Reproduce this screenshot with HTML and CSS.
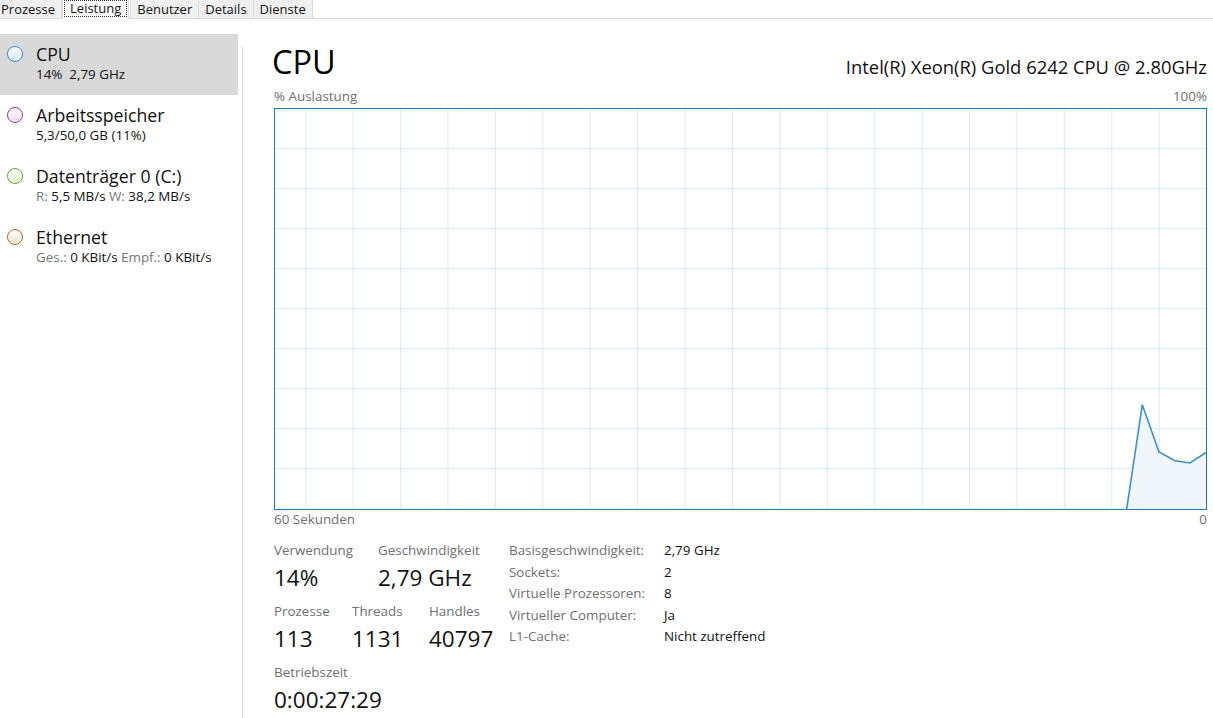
FILE: index.html
```html
<!DOCTYPE html>
<html>
  <head>
    <meta charset="UTF-8">
    <title>Task-Manager - Leistung</title>
    <link rel="stylesheet" href="styles.css">
  </head>
  <body>
    <div class="tabs">
      <span class="tab">Prozesse</span>
      <span class="tab active"><span class="focus">Leistung</span></span>
      <span class="tab">Benutzer</span>
      <span class="tab">Details</span>
      <span class="tab">Dienste</span>
    </div>

    <div class="app">
      <!-- linke Liste -->
      <div class="sidebar">
        <div class="item selected">
          <span class="dot cpu"></span>
          <div>
            <div class="name">CPU</div>
            <div class="sub">14%&nbsp; 2,79 GHz</div>
          </div>
        </div>
        <div class="item">
          <span class="dot mem"></span>
          <div>
            <div class="name">Arbeitsspeicher</div>
            <div class="sub">5,3/50,0 GB (11%)</div>
          </div>
        </div>
        <div class="item">
          <span class="dot disk"></span>
          <div>
            <div class="name">Datenträger 0 (C:)</div>
            <div class="sub"><span class="key">R:</span> 5,5 MB/s <span class="key">W:</span> 38,2 MB/s</div>
          </div>
        </div>
        <div class="item">
          <span class="dot net"></span>
          <div>
            <div class="name">Ethernet</div>
            <div class="sub"><span class="key">Ges.:</span> 0 KBit/s <span class="key">Empf.:</span> 0 KBit/s</div>
          </div>
        </div>
      </div>

      <div class="divider"></div>

      <div class="panel">
        <div class="head">
          <div class="title">CPU</div>
          <div class="model">Intel(R) Xeon(R) Gold 6242 CPU @ 2.80GHz</div>
        </div>
        <div class="axis top">
          <span>% Auslastung</span>
          <span>100%</span>
        </div>
        <div class="graph">
          <svg width="931" height="400" viewBox="0 0 931 400">
            <g class="grid" id="grid"></g>
            <polygon class="area" points="851.7,400 867.3,295.7 884,343 900,351.7 915,354 931,343.5 931,400"></polygon>
            <polyline class="line" points="851.7,400 867.3,295.7 884,343 900,351.7 915,354 931,343.5"></polyline>
          </svg>
        </div>
        <div class="axis bottom">
          <span>60 Sekunden</span>
          <span>0</span>
        </div>

        <div class="stats">
          <div class="live">
            <div class="row">
              <div class="stat w104"><div class="label">Verwendung</div><div class="value">14%</div></div>
              <div class="stat"><div class="label">Geschwindigkeit</div><div class="value">2,79 GHz</div></div>
            </div>
            <div class="row">
              <div class="stat w78"><div class="label">Prozesse</div><div class="value">113</div></div>
              <div class="stat w77"><div class="label">Threads</div><div class="value">1131</div></div>
              <div class="stat"><div class="label">Handles</div><div class="value">40797</div></div>
            </div>
            <div class="row">
              <div class="stat"><div class="label">Betriebszeit</div><div class="value">0:00:27:29</div></div>
            </div>
          </div>
          <div class="info">
            <span class="k">Basisgeschwindigkeit:</span><span class="v">2,79 GHz</span>
            <span class="k">Sockets:</span><span class="v">2</span>
            <span class="k">Virtuelle Prozessoren:</span><span class="v">8</span>
            <span class="k">Virtueller Computer:</span><span class="v">Ja</span>
            <span class="k">L1-Cache:</span><span class="v">Nicht zutreffend</span>
          </div>
        </div>
      </div>
    </div>

    <script>
      // Gitterlinien des Diagramms
      var grid = document.getElementById('grid');
      var ns = 'http://www.w3.org/2000/svg';
      for (var i = 0; i < 19; i++) {
        var x = 30.7 + i * 47.42;
        var v = document.createElementNS(ns, 'line');
        v.setAttribute('x1', x); v.setAttribute('x2', x);
        v.setAttribute('y1', 0); v.setAttribute('y2', 400);
        grid.appendChild(v);
      }
      for (var j = 0; j < 9; j++) {
        var y = 39.5 + j * 40;
        var h = document.createElementNS(ns, 'line');
        h.setAttribute('x1', 0); h.setAttribute('x2', 931);
        h.setAttribute('y1', y); h.setAttribute('y2', y);
        grid.appendChild(h);
      }
    </script>
  </body>
</html>
```

FILE: styles.css
```css
body {
  margin: 0;
  background: #fff;
  font-family: "Open Sans", "Noto Sans", sans-serif;
  color: #000;
  overflow: hidden;
}

/* Reiter oben */
.tabs {
  display: flex;
  height: 19px;
  border-bottom: 1px solid #dadada;
  box-sizing: border-box;
  margin-left: -6px;
  font-size: 13px;
}
.tab {
  display: flex;
  align-items: center;
  height: 18px;
  padding: 0 6px;
  background: #f0f0f0;
  border: 1px solid #dadada;
  border-top: none;
  border-bottom: none;
  margin-right: -1px;
  box-sizing: border-box;
  color: #111;
}
.tab.active {
  background: #fff;
  height: 19px;
  padding: 0 1px 2px;
  margin: 0 1px;
}
.tab.active .focus {
  border: 1px dotted #333;
  padding: 0 5px;
  line-height: 15px;
}

.app {
  display: flex;
  height: 699px;
}

/* linke Liste */
.sidebar {
  width: 238px;
  padding-top: 15px;
}
.item {
  display: flex;
  align-items: flex-start;
  height: 61px;
  box-sizing: border-box;
  padding: 9px 0 0 7px;
}
.item.selected {
  background: #d9d9d9;
}
.dot {
  width: 14px;
  height: 14px;
  border-radius: 50%;
  border: 1.5px solid;
  margin: 3px 13px 0 0;
  flex: none;
}
.dot.cpu { border-color: #2f8bd3; background: radial-gradient(circle at 50% 75%, #d4e8f8, #fff 75%); }
.dot.mem { border-color: #9630bb; background: radial-gradient(circle at 50% 75%, #efdcf6, #fff 75%); }
.dot.disk { border-color: #5fae2c; background: radial-gradient(circle at 50% 75%, #e1f2d2, #fff 75%); }
.dot.net { border-color: #b0671f; background: radial-gradient(circle at 50% 75%, #f4e2d0, #fff 75%); }
.name {
  font-size: 17.7px;
  line-height: 22px;
  color: #111;
}
.sub {
  font-size: 13.4px;
  line-height: 18px;
  color: #111;
}
.sub .key {
  color: #777;
}

.divider {
  width: 1px;
  background: #e3e3e3;
  margin: 27px 0 0 4px;
}

/* rechter Bereich */
.panel {
  flex: 1;
  padding: 0 6px 0 29px;
}
.head {
  display: flex;
  justify-content: space-between;
  align-items: baseline;
  margin-top: 24px;
}
.title {
  font-size: 32.5px;
  line-height: 38px;
}
.model {
  font-size: 18.4px;
  color: #111;
}
.axis {
  display: flex;
  justify-content: space-between;
  font-size: 13.4px;
  line-height: 16px;
  color: #707070;
  margin-left: 2px;
}
.axis.top {
  margin-top: 7px;
  margin-bottom: 4px;
}
.axis.bottom {
  margin-top: 1px;
}

.graph {
  margin-left: 2px;
  width: 931px;
  height: 400px;
  border: 1px solid #117dbb;
}
.graph svg {
  display: block;
}
.grid line {
  stroke: #d9eaf6;
  stroke-width: 1;
}
.area {
  fill: #f1f6fb;
}
.line {
  fill: none;
  stroke: #3a8fd0;
  stroke-width: 1.6;
}

/* Kennzahlen */
.stats {
  display: flex;
  margin: 14px 0 0 2px;
}
.live {
  width: 235px;
}
.row {
  display: flex;
  height: 61px;
}
.stat.w104 { width: 104px; }
.stat.w78 { width: 78px; }
.stat.w77 { width: 77px; }
.label {
  font-size: 13.4px;
  line-height: 18px;
  color: #707070;
}
.value {
  font-size: 22.5px;
  line-height: 30px;
  margin-top: 4px;
  color: #111;
}
.info {
  display: grid;
  grid-template-columns: 155px auto;
  grid-auto-rows: 21.5px;
  font-size: 13.4px;
  line-height: 21.5px;
  margin-top: -1px;
}
.info .k {
  color: #707070;
}
.info .v {
  color: #111;
}
```
